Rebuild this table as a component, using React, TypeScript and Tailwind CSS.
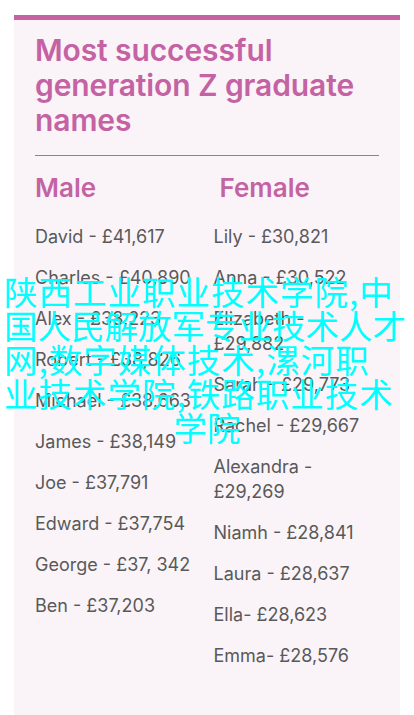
import React from "react";

const male = [
  "David - £41,617",
  "Charles - £40,890",
  "Alex - £38,223",
  "Robert - £38,826",
  "Michael - £38,663",
  "James - £38,149",
  "Joe - £37,791",
  "Edward - £37,754",
  "George - £37, 342",
  "Ben - £37,203",
];

const female: string[][] = [
  ["Lily - £30,821"],
  ["Anna - £30,522"],
  ["Elizabeth -", "£29,882"],
  ["Sarah - £29,773"],
  ["Rachel - £29,667"],
  ["Alexandra -", "£29,269"],
  ["Niamh - £28,841"],
  ["Laura - £28,637"],
  ["Ella- £28,623"],
  ["Emma- £28,576"],
];

export default function App() {
  return (
    <div className="relative min-h-[715px] bg-white pt-[15px] px-[14px] font-['Inter',sans-serif] overflow-hidden">
      <div className="h-[700px] bg-[#faf4f8] border-t-[5px] border-[#c462a4] px-[21px] pt-[13px]">
        <h1 className="text-[30px] leading-[35px] font-semibold text-[#c462a4] tracking-[-0.1px]">
          Most successful
          <br />
          generation Z graduate
          <br />
          names
        </h1>
        <div className="mt-[17px] h-px bg-[#c462a4]" />
        <div className="mt-[16px] grid grid-cols-2 gap-x-[13px]">
          <div className="flex flex-col">
            <h2 className="text-[26px] leading-[32px] font-semibold text-[#c462a4]">Male</h2>
            <div className="mt-[20px] flex flex-col gap-[16px]">
              {male.map((m) => (
                <div key={m} className="text-[18px] leading-[25px] text-[#595959] whitespace-nowrap">
                  {m}
                </div>
              ))}
            </div>
          </div>
          <div className="flex flex-col">
            <h2 className="pl-[6px] text-[26px] leading-[32px] font-semibold text-[#c462a4]">Female</h2>
            <div className="mt-[20px] flex flex-col gap-[16px]">
              {female.map((f) => (
                <div key={f[0]} className="text-[18px] leading-[25px] text-[#595959] whitespace-nowrap">
                  {f.map((l, i) => (
                    <div key={i}>{l}</div>
                  ))}
                </div>
              ))}
            </div>
          </div>
        </div>
      </div>
      <div className="absolute left-0 top-[274px] w-[414px] font-['Noto_Sans_CJK_SC',sans-serif] text-[33.5px] leading-[34px] text-[#00ffff] whitespace-nowrap">
        <div className="pl-[4px] tracking-[1px]">陕西工业职业技术学院,中</div>
        <div className="pl-[4px]">国人民解放军专业技术人才</div>
        <div className="pl-[4px] tracking-[1px]">网,数字媒体技术,漯河职</div>
        <div className="pl-[4px] tracking-[1px]">业技术学院,铁路职业技术</div>
        <div className="text-center">学院</div>
      </div>
    </div>
  );
}
